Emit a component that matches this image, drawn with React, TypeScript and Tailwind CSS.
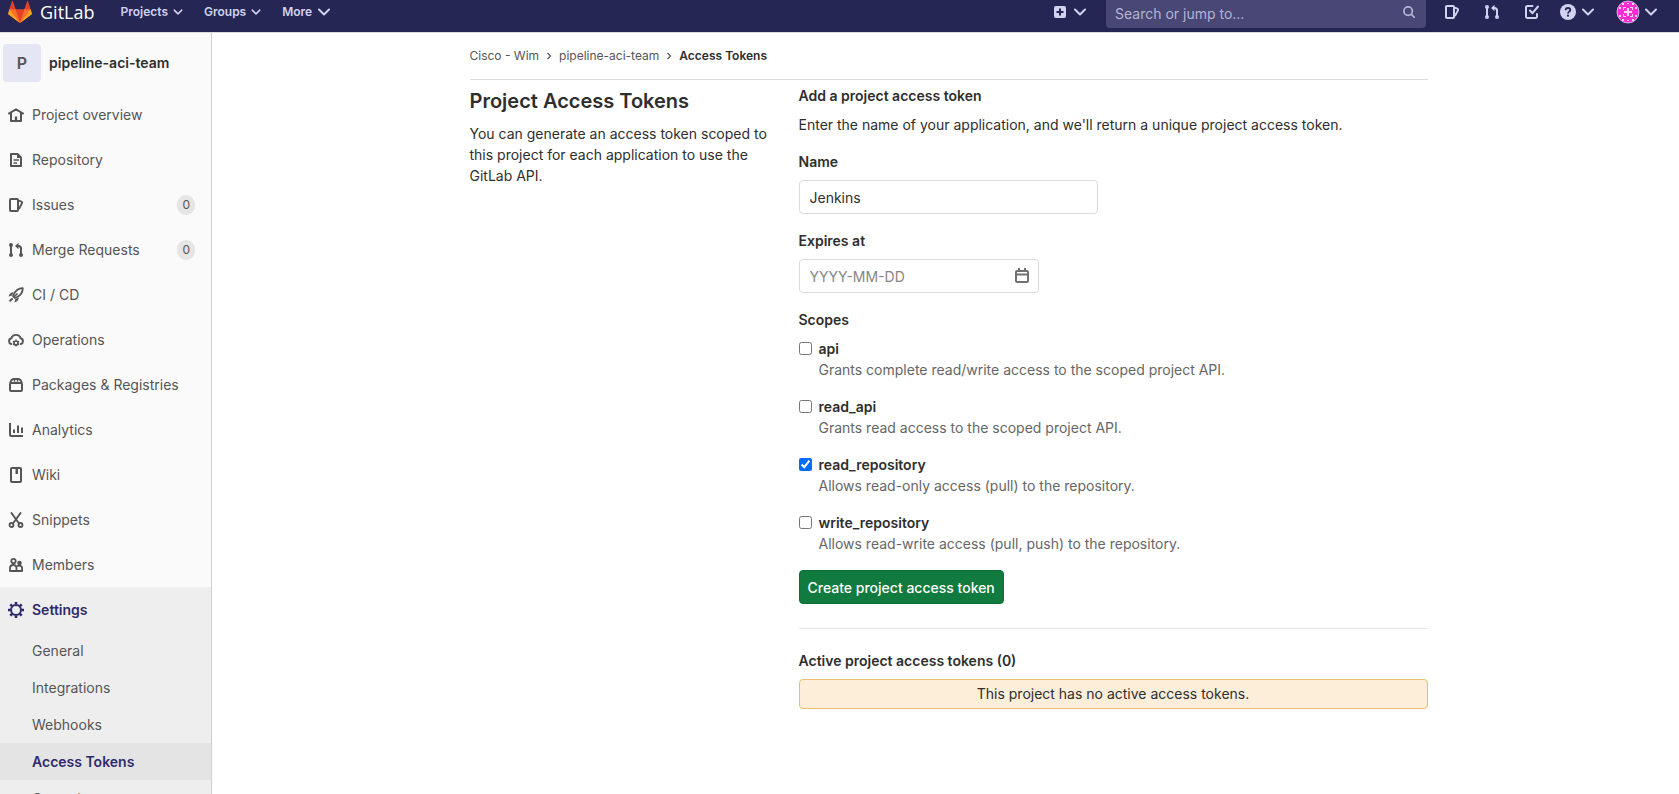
import { useState, type ReactNode } from "react";

type IconProps = { children: ReactNode; className?: string };

function Icon({ children, className = "size-4" }: IconProps) {
  return (
    <svg
      viewBox="0 0 16 16"
      fill="none"
      stroke="currentColor"
      strokeWidth="2"
      aria-hidden="true"
      className={`shrink-0 ${className}`}
    >
      {children}
    </svg>
  );
}

const icons = {
  home: (
    <>
      <path d="M.8 6.6 8 2.4l7.2 4.2" strokeLinecap="round" strokeLinejoin="round" strokeWidth="1.8" />
      <path d="M3 6v8h10V6" strokeLinejoin="round" />
      <path d="M8 9.5V14" strokeWidth="2.4" />
    </>
  ),
  doc: (
    <>
      <path d="M3 2h6.5L13 5.5V14H3z" strokeLinejoin="round" />
      <path d="M5.5 8H11M5.5 11H9" strokeWidth="1.6" />
      <path d="M9 2v4h4z" fill="currentColor" stroke="none" />
    </>
  ),
  issues: (
    <>
      <rect x="2" y="2" width="8" height="12" rx="1" />
      <path d="m10.5 3.6 3 1.1c.6.2.8.8.6 1.3L11 12" strokeWidth="1.8" strokeLinejoin="round" />
    </>
  ),
  merge: (
    <>
      <path d="M3 3v10M13 13V6.5C13 4.8 12 4 10.5 4H9" />
      <path d="M10.5.8v6.4L7 4z" fill="currentColor" stroke="none" />
      <g fill="currentColor" stroke="none">
        <circle cx="3" cy="3" r="2" />
        <circle cx="3" cy="13" r="2" />
        <circle cx="13" cy="13" r="2" />
      </g>
    </>
  ),
  rocket: (
    <>
      <path d="M14.8 1.2C10.5 1.2 7 4 5 9l2 2c5-2 7.8-5.5 7.8-9.8Z" strokeLinejoin="round" strokeWidth="1.8" />
      <path d="M5.5 5.2C3 5.2 1.2 7 .6 9.6L4 8.6ZM10.8 10.5c0 2.5-1.8 4.3-4.4 4.9l1-3.4Z" fill="currentColor" stroke="none" />
      <path d="m9.5 6.500-3 3" strokeWidth="1.6" />
      <path d="m4 12-1.8 1.8" strokeLinecap="round" />
    </>
  ),
  cloud: (
    <>
      <path d="M3.2 12C1.8 11.5 1 10.5 1 9.2 1 7.7 2 6.6 3.5 6.3 4 4.2 5.8 2.9 8 2.9s4 1.3 4.5 3.4C14 6.6 15 7.700 15 9.2c0 1.3-.8 2.3-2.2 2.8" strokeWidth="1.9" strokeLinecap="round" />
      <circle cx="8" cy="11" r="2" strokeWidth="1.7" />
      <path d="M8 7.5v1.3M8 13.2v1.3M4.9 9.3l1.2.6M9.9 12.1l1.2.6M11.1 9.3l-1.2.6M6.1 12.1l-1.2.6" strokeWidth="1.4" />
    </>
  ),
  package: (
    <>
      <rect x="2" y="6" width="12" height="8" rx="1.2" />
      <path d="M2.4 6C2.8 3.6 4.2 2 6 2h4c1.8 0 3.2 1.6 3.6 4" />
      <path d="M6.5 2v2.8M9.5 2v2.8" strokeWidth="1.4" />
    </>
  ),
  chart: (
    <>
      <path d="M2 1v11.5c0 .8.6 1.5 1.5 1.5H15" />
      <path d="M6 7.5V11M10 3.5V11M14 5.5V11" />
    </>
  ),
  book: (
    <>
      <rect x="3" y="1" width="10" height="14" rx="1" />
      <path d="M7.500 1v6h2.500V1" fill="currentColor" stroke="none" />
    </>
  ),
  scissors: (
    <>
      <circle cx="3.5" cy="13" r="2" strokeWidth="1.8" />
      <circle cx="12.5" cy="13" r="2" strokeWidth="1.8" />
      <path d="M3.5 1 11 11.5M12.5 1 5 11.5" strokeWidth="1.9" strokeLinecap="round" />
    </>
  ),
  members: (
    <>
      <circle cx="5.5" cy="4" r="2.2" strokeWidth="1.8" />
      <path d="M2 14v-3c0-2 1.4-3 3.2-3 1.9 0 3.3 1 3.3 3v3z" strokeLinejoin="round" strokeWidth="1.8" />
      <circle cx="11.5" cy="6" r="2.3" fill="currentColor" stroke="none" />
      <path d="M9 9.4c.6-.5 1.4-.7 2.2-.7 1.7 0 2.9 1 2.9 2.7V14H8.5" strokeWidth="1.8" strokeLinejoin="round" />
    </>
  ),
  gear: (
    <>
      <circle cx="8" cy="8" r="5" />
      <g strokeWidth="2.6">
        <path d="M8 0v2.5M8 13.5V16M0 8h2.5M13.5 8H16" />
        <path d="m2.3 2.3 1.8 1.8M11.9 11.9l1.8 1.8M2.3 13.7l1.8-1.8M11.9 4.1l1.8-1.8" />
      </g>
    </>
  ),
  todo: (
    <>
      <path d="M8.5 2h-5A1.5 1.5 0 0 0 2 3.5v9A1.5 1.5 0 0 0 3.5 14h8a1.5 1.5 0 0 0 1.5-1.5V10" strokeLinecap="round" />
      <path d="m6 6.5 2.5 2.7L14 2.5" strokeLinecap="round" strokeLinejoin="round" />
    </>
  ),
  calendar: (
    <>
      <rect x="2" y="3" width="12" height="11" rx="1" />
      <path d="M1 6.5h14M5 0v3M11 0v3" />
    </>
  ),
  search: (
    <>
      <circle cx="7" cy="7" r="4.8" />
      <path d="m11 11 3 3" strokeLinecap="round" />
    </>
  ),
  chevron: <path d="m3 5.5 5 5 5-5" strokeLinecap="round" strokeLinejoin="round" />,
  chevronRight: <path d="m6 4 4 4-4 4" strokeWidth="1.5" />,
};

function Fox() {
  return (
    <svg viewBox="0 0 36 36" className="size-6 shrink-0" aria-hidden="true">
      <path fill="#e24329" d="m2 14 9.380 9v-9l-4-12.280c-.205-.632-1.176-.632-1.380 0z" />
      <path fill="#e24329" d="m34 14-9.380 9v-9l4-12.280c.205-.632 1.176-.632 1.380 0z" />
      <path fill="#e24329" d="M18 34.380 3 14h30z" />
      <path fill="#fc6d26" d="M18 34.380 11.380 14H2l4 11z" />
      <path fill="#fc6d26" d="M18 34.380 24.620 14H34l-4 11z" />
      <path fill="#fca326" d="M2 14 .1 20.160c-.180.565 0 1.200.5 1.560l17.420 12.660z" />
      <path fill="#fca326" d="m34 14 1.900 6.160c.180.565 0 1.200-.5 1.560L18 34.380z" />
    </svg>
  );
}

function Avatar() {
  return (
    <svg viewBox="0 0 24 24" className="size-6 shrink-0" aria-hidden="true">
      <defs>
        <clipPath id="avatar-clip">
          <circle cx="12" cy="12" r="11" />
        </clipPath>
      </defs>
      <g clipPath="url(#avatar-clip)">
        <path fill="#fb2bd3" d="M0 0h24v24H0z" />
        <path
          fill="#fbd5f5"
          d="M11 8h2v3h3v2h-3v3h-2v-3H8v-2h3zM7 7h3v1H8v2H7zM14 7h3v3h-1V8h-2zM7 14h1v2h2v1H7zM16 14h1v3h-3v-1h2zM6 3h2v2H6zM16 3h2v2h-2zM6 19h2v2H6zM16 19h2v2h-2zM3 7h2v2H3zM19 7h2v2h-2zM3 15h2v2H3zM19 15h2v2h-2zM11 3h2v1h-2zM11 20h2v1h-2z"
        />
      </g>
      <circle cx="12" cy="12" r="11" fill="none" stroke="#d4b4e6" />
    </svg>
  );
}

const primaryNav = [
  { label: "Project overview", icon: icons.home },
  { label: "Repository", icon: icons.doc },
  { label: "Issues", icon: icons.issues, count: 0 },
  { label: "Merge Requests", icon: icons.merge, count: 0 },
  { label: "CI / CD", icon: icons.rocket },
  { label: "Operations", icon: icons.cloud },
  { label: "Packages & Registries", icon: icons.package },
  { label: "Analytics", icon: icons.chart },
  { label: "Wiki", icon: icons.book },
  { label: "Snippets", icon: icons.scissors },
  { label: "Members", icon: icons.members },
];

const settingsNav = ["General", "Integrations", "Webhooks", "Access Tokens", "Operations"];

const scopes = [
  { name: "api", text: "Grants complete read/write access to the scoped project API." },
  { name: "read_api", text: "Grants read access to the scoped project API." },
  { name: "read_repository", text: "Allows read-only access (pull) to the repository." },
  { name: "write_repository", text: "Allows read-write access (pull, push) to the repository." },
];

function Header() {
  return (
    <header className="flex h-[33px] shrink-0 items-start justify-between border-b border-[#dbdbdb] bg-[#262654] pr-5 pl-2 text-[#d1d1f0]">
      <div className="flex h-6 items-center">
        <a href="#" className="flex items-center gap-2">
          <Fox />
          <span className="font-['Open_Sans',sans-serif] text-lg leading-6 text-white">GitLab</span>
        </a>
        <nav className="ml-[26px] flex items-center gap-5 text-xs font-semibold">
          <button type="button" className="flex items-center gap-1">
            Projects <Icon className="size-3">{icons.chevron}</Icon>
          </button>
          <button type="button" className="flex items-center gap-1">
            Groups <Icon className="size-3">{icons.chevron}</Icon>
          </button>
          <button type="button" className="flex items-center gap-1">
            More <Icon>{icons.chevron}</Icon>
          </button>
        </nav>
      </div>
      <div className="flex items-start">
        <button type="button" aria-label="New" className="mr-[18px] flex h-6 items-center gap-1">
          <svg viewBox="0 0 16 16" className="size-4" aria-hidden="true">
            <rect x="2" y="2" width="12" height="12" rx="2" fill="currentColor" />
            <path d="M8 4.500v7M4.500 8h7" stroke="#262654" strokeWidth="2" />
          </svg>
          <Icon>{icons.chevron}</Icon>
        </button>
        <label className="flex h-7 w-80 items-start rounded-b bg-[#484775] pr-2.5 pl-[9px] text-[#b5b4d2]">
          <input
            type="text"
            aria-label="Search or jump to"
            placeholder="Search or jump to..."
            className="h-[26px] min-w-0 flex-1 bg-transparent text-sm outline-none placeholder:text-[#b5b4d2]"
          />
          <span className="flex h-6 items-center">
            <Icon className="size-3.5">{icons.search}</Icon>
          </span>
        </label>
        <div className="flex h-6 items-center gap-6 pl-[18px]">
          <a href="#" aria-label="Issues"><Icon>{icons.issues}</Icon></a>
          <a href="#" aria-label="Merge requests"><Icon>{icons.merge}</Icon></a>
          <a href="#" aria-label="To-Do List"><Icon>{icons.todo}</Icon></a>
        </div>
        <button type="button" aria-label="Help" className="ml-5 flex h-6 items-center gap-1">
          <svg viewBox="0 0 16 16" className="size-4" aria-hidden="true">
            <circle cx="8" cy="8" r="8" fill="currentColor" />
            <path d="M5.700 6.300C5.700 4.900 6.700 4 8 4s2.300.8 2.300 2.100C10.300 7.600 8 7.700 8 9.400" fill="none" stroke="#262654" strokeWidth="1.800" />
            <circle cx="8" cy="11.700" r="1.100" fill="#262654" />
          </svg>
          <Icon>{icons.chevron}</Icon>
        </button>
        <button type="button" aria-label="User menu" className="ml-5 flex h-6 items-center gap-[3px]">
          <Avatar />
          <Icon>{icons.chevron}</Icon>
        </button>
      </div>
    </header>
  );
}

function Sidebar() {
  return (
    <aside className="w-[212px] shrink-0 overflow-hidden border-r border-[#d0d0d0] bg-[#fafafa] text-sm text-[#555]">
      <a href="#" className="flex h-[59px] items-center gap-2 pl-[3px] text-[#2e2e2e]">
        <span className="grid size-[38px] place-items-center rounded bg-[#e5e6f3] text-base font-semibold text-[#555]">
          P
        </span>
        <span className="font-semibold">pipeline-aci-team</span>
      </a>
      <ul>
        {primaryNav.map((item) => (
          <li key={item.label}>
            <a href="#" className="flex h-[45px] items-center gap-2 pr-4 pl-2">
              <Icon>{item.icon}</Icon>
              {item.label}
              {item.count !== undefined && (
                <span className="ml-auto rounded-full bg-[#e5e5e5] px-[5px] text-xs leading-5">{item.count}</span>
              )}
            </a>
          </li>
        ))}
        <li className="bg-[#eee]">
          <a href="#" className="flex h-[45px] items-center gap-2 pl-2 font-semibold text-[#2f2a6b]">
            <Icon>{icons.gear}</Icon>
            Settings
          </a>
          <ul>
            {settingsNav.map((label) => (
              <li key={label}>
                <a
                  href="#"
                  className={
                    label === "Access Tokens"
                      ? "flex h-[37px] items-center bg-[#e4e4e4] pl-8 font-semibold text-[#2f2a6b]"
                      : "flex h-[37px] items-center pl-8"
                  }
                >
                  {label}
                </a>
              </li>
            ))}
          </ul>
        </li>
      </ul>
    </aside>
  );
}

function TokenForm() {
  const [name, setName] = useState("Jenkins");
  const [selected, setSelected] = useState(["read_repository"]);
  const toggle = (scope: string) =>
    setSelected((current) =>
      current.includes(scope) ? current.filter((s) => s !== scope) : [...current, scope],
    );

  return (
    <form onSubmit={(event) => event.preventDefault()}>
      <h5 className="font-semibold">Add a project access token</h5>
      <p className="mt-2">Enter the name of your application, and we'll return a unique project access token.</p>
      <div className="mt-4">
        <label htmlFor="token-name" className="block font-semibold">Name</label>
        <input
          id="token-name"
          type="text"
          value={name}
          onChange={(event) => setName(event.target.value)}
          className="mt-2 block h-[34px] w-[299px] rounded border border-[#dbdbdb] bg-white px-2.5"
        />
      </div>
      <div className="mt-4">
        <label htmlFor="token-expiry" className="block font-semibold">Expires at</label>
        <div className="mt-2 flex h-[34px] w-60 items-center rounded border border-[#dbdbdb] bg-white pr-2 pl-2.5">
          <input
            id="token-expiry"
            type="text"
            placeholder="YYYY-MM-DD"
            className="min-w-0 flex-1 outline-none placeholder:text-[#868686]"
          />
          <span className="text-[#707070]">
            <Icon>{icons.calendar}</Icon>
          </span>
        </div>
      </div>
      <fieldset className="mt-4">
        <legend className="font-semibold">Scopes</legend>
        <div className="mt-2 flex flex-col gap-4">
          {scopes.map((scope) => (
            <div key={scope.name}>
              <label className="flex items-center gap-[7px] font-semibold">
                <input
                  type="checkbox"
                  checked={selected.includes(scope.name)}
                  onChange={() => toggle(scope.name)}
                  className="size-[13px] accent-[#006dff]"
                />
                {scope.name}
              </label>
              <p className="pl-5 text-[#666]">{scope.text}</p>
            </div>
          ))}
        </div>
      </fieldset>
      <button
        type="submit"
        className="mt-4 h-[34px] rounded border border-[#0e6f3a] bg-[#117a3e] px-2 font-medium text-white"
      >
        Create project access token
      </button>
    </form>
  );
}

export default function App() {
  return (
    <div className="flex h-screen flex-col overflow-hidden bg-white font-['Inter','Liberation_Sans',sans-serif] text-sm text-[#2e2e2e]">
      <Header />
      <div className="flex min-h-0 flex-1">
        <Sidebar />
        <main className="min-w-0 flex-1 overflow-hidden pl-1.5">
          <div className="mx-auto max-w-[990px] px-4 leading-[21px]">
            <nav aria-label="Breadcrumb" className="flex h-[47px] items-center gap-1 border-b border-[#dbdbdb] text-xs text-[#555]">
              <a href="#">Cisco - Wim</a>
              <Icon className="size-3">{icons.chevronRight}</Icon>
              <a href="#">pipeline-aci-team</a>
              <Icon className="size-3">{icons.chevronRight}</Icon>
              <a href="#" className="font-semibold text-[#2e2e2e]">Access Tokens</a>
            </nav>
            <div className="flex pt-[5px]">
              <section className="w-[329px] shrink-0 pt-0.5 pr-4">
                <h4 className="text-xl leading-7 font-semibold">Project Access Tokens</h4>
                <p className="mt-2">
                  You can generate an access token scoped to this project for each application to use the GitLab API.
                </p>
              </section>
              <section className="min-w-0 flex-1">
                <TokenForm />
                <hr className="mt-6 border-[#e5e5e5]" />
                <h5 className="mt-[21px] font-semibold">Active project access tokens (0)</h5>
                <p className="mt-2 rounded border border-[#e9be74] bg-[#fdeed9] text-center leading-7">
                  This project has no active access tokens.
                </p>
              </section>
            </div>
          </div>
        </main>
      </div>
    </div>
  );
}
